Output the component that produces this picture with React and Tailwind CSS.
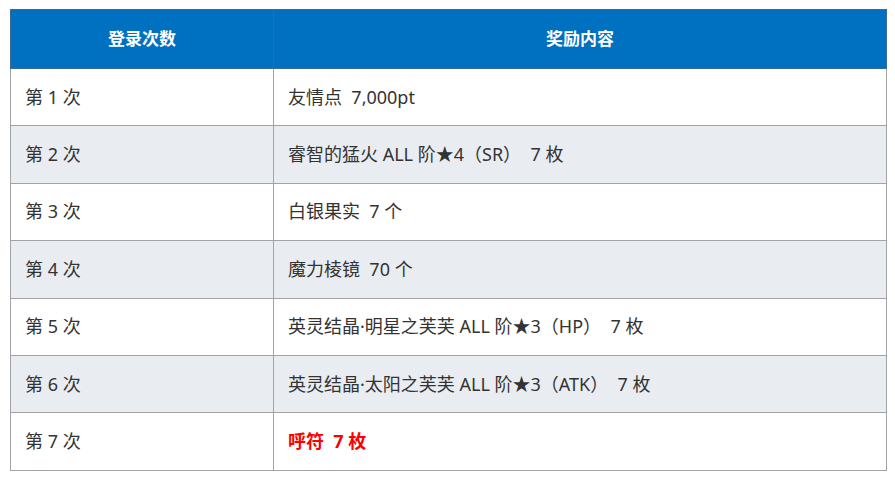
import React from "react";

const rows = [
  { n: "第 1 次", r: "友情点\u00a0\u00a07,000pt" },
  { n: "第 2 次", r: "睿智的猛火 ALL 阶★4（SR）\u00a0\u00a07 枚" },
  { n: "第 3 次", r: "白银果实\u00a0\u00a07 个" },
  { n: "第 4 次", r: "魔力棱镜\u00a0\u00a070 个" },
  { n: "第 5 次", r: "英灵结晶·明星之芙芙 ALL 阶★3（HP）\u00a0\u00a07 枚" },
  { n: "第 6 次", r: "英灵结晶·太阳之芙芙 ALL 阶★3（ATK）\u00a0\u00a07 枚" },
  { n: "第 7 次", r: "呼符\u00a0\u00a07 枚", red: true },
];

export default function App() {
  return (
    <div
      className="w-[895px] h-[479px] bg-white pt-[9px] pl-[10px]"
      style={{ fontFamily: '"Noto Sans", "Noto Sans CJK SC", sans-serif' }}
    >
      <table className="w-[877px] border-collapse text-[18px] text-[#333333]">
        <thead>
          <tr className="h-[59px] bg-[#0070c0] text-white">
            <th className="w-[263px] border border-[#3a6b94] font-bold text-center text-[17px]">登录次数</th>
            <th className="border border-[#3a6b94] font-bold text-center text-[17px]">奖励内容</th>
          </tr>
        </thead>
        <tbody>
          {rows.map((row, i) => (
            <tr key={i} className={i % 2 === 1 ? "h-[57.4px] bg-[#e9edf2]" : "h-[57.4px] bg-white"}>
              <td className="border border-[#a3a3a3] pl-[14px]">{row.n}</td>
              <td
                className={
                  row.red
                    ? "border border-[#a3a3a3] pl-[14px] text-[#ff0000] font-bold"
                    : "border border-[#a3a3a3] pl-[14px]"
                }
              >
                {row.r}
              </td>
            </tr>
          ))}
        </tbody>
      </table>
    </div>
  );
}
